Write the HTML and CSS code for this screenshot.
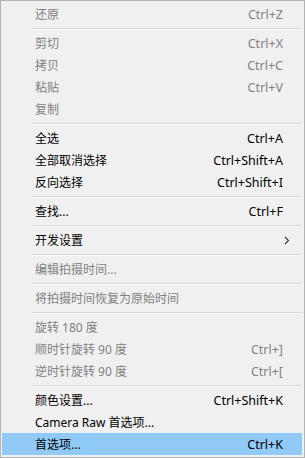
FILE: index.html
```html
<!DOCTYPE html>
<html lang="zh-CN">
<head>
    <meta charset="UTF-8">
    <title>编辑菜单</title>
    <link rel="stylesheet" href="styles.css">
</head>
<body>
    <div class="menu">
        <div class="item disabled"><span class="label">还原</span><span class="key">Ctrl+Z</span></div>
        <div class="sep"></div>
        <div class="item disabled"><span class="label">剪切</span><span class="key">Ctrl+X</span></div>
        <div class="item disabled"><span class="label">拷贝</span><span class="key">Ctrl+C</span></div>
        <div class="item disabled"><span class="label">粘贴</span><span class="key">Ctrl+V</span></div>
        <div class="item disabled"><span class="label">复制</span><span class="key"></span></div>
        <div class="sep"></div>
        <div class="item"><span class="label">全选</span><span class="key">Ctrl+A</span></div>
        <div class="item"><span class="label">全部取消选择</span><span class="key">Ctrl+Shift+A</span></div>
        <div class="item"><span class="label">反向选择</span><span class="key">Ctrl+Shift+I</span></div>
        <div class="sep"></div>
        <div class="item"><span class="label">查找...</span><span class="key">Ctrl+F</span></div>
        <div class="sep"></div>
        <div class="item"><span class="label">开发设置</span>
            <svg class="arrow" width="6" height="9" viewBox="0 0 6 9"><path d="M1 1 L4.5 4.5 L1 8" fill="none" stroke="#333" stroke-width="1.1"/></svg>
        </div>
        <div class="sep"></div>
        <div class="item disabled"><span class="label">编辑拍摄时间...</span><span class="key"></span></div>
        <div class="sep"></div>
        <div class="item disabled"><span class="label">将拍摄时间恢复为原始时间</span><span class="key"></span></div>
        <div class="sep"></div>
        <div class="item disabled"><span class="label">旋转 180 度</span><span class="key"></span></div>
        <div class="item disabled"><span class="label">顺时针旋转 90 度</span><span class="key">Ctrl+]</span></div>
        <div class="item disabled"><span class="label">逆时针旋转 90 度</span><span class="key">Ctrl+[</span></div>
        <div class="sep"></div>
        <div class="item"><span class="label">颜色设置...</span><span class="key">Ctrl+Shift+K</span></div>
        <div class="item"><span class="label">Camera Raw 首选项...</span><span class="key"></span></div>
        <div class="item active"><span class="label">首选项...</span><span class="key">Ctrl+K</span></div>
    </div>
</body>
</html>
```

FILE: styles.css
```css
body {
    margin: 0;
    background: #f0f0f0;
}
.menu {
    box-sizing: border-box;
    width: 305px;
    height: 458px;
    background: #f0f0f0;
    border: 1px solid #b4b4b4;
    padding: 2px 2px 2px 1px;
    font-family: "Noto Sans", "Noto Sans CJK SC", sans-serif;
    font-size: 12px;
    color: #000;
}
.item {
    display: flex;
    align-items: center;
    justify-content: space-between;
    height: 22px;
    padding: 0 19px 0 33px;
}
.key {
    font-size: 12.5px;
}
.item.disabled {
    color: #808080;
}
.item.active {
    background: #91c9f7;
}
.arrow {
    margin-right: -7px;
}
.sep {
    height: 1px;
    margin: 3px 0 2px 30px;
    background: #d7d7d7;
    border-bottom: 1px solid #fcfcfc;
}
```
